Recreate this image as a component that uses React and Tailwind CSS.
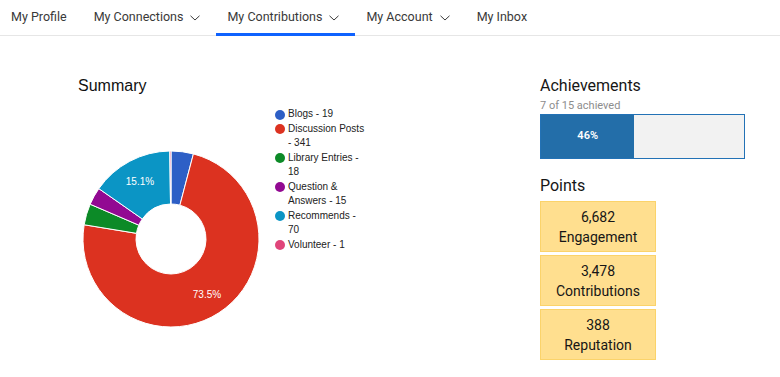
import React from 'react';

const tabs = [
  { label: 'My Profile' },
  { label: 'My Connections', menu: true },
  { label: 'My Contributions', menu: true, active: true },
  { label: 'My Account', menu: true },
  { label: 'My Inbox' },
];

const slices = [
  { name: 'Blogs', value: 19, color: '#2d5fc6' },
  { name: 'Discussion Posts', value: 341, color: '#dc3220' },
  { name: 'Library Entries', value: 18, color: '#0c8a27' },
  { name: 'Question & Answers', value: 15, color: '#920992' },
  { name: 'Recommends', value: 70, color: '#0b95c5' },
  { name: 'Volunteer', value: 1, color: '#e0457a' },
];

const points = [
  { value: '6,682', label: 'Engagement' },
  { value: '3,478', label: 'Contributions' },
  { value: '388', label: 'Reputation' },
];

const Chevron = () => (
  <svg width="10" height="6" viewBox="0 0 10 6" className="ml-[7px]">
    <path d="M0.5 0.8 L5 5 L9.5 0.8" fill="none" stroke="#393939" strokeWidth="1" />
  </svg>
);

const arcPath = (cx, cy, R, r, a0, a1) => {
  const pt = (rad, a) => [cx + rad * Math.sin(a), cy - rad * Math.cos(a)];
  const large = a1 - a0 > Math.PI ? 1 : 0;
  const [x0, y0] = pt(R, a0);
  const [x1, y1] = pt(R, a1);
  const [x2, y2] = pt(r, a1);
  const [x3, y3] = pt(r, a0);
  return `M${x0} ${y0} A${R} ${R} 0 ${large} 1 ${x1} ${y1} L${x2} ${y2} A${r} ${r} 0 ${large} 0 ${x3} ${y3} Z`;
};

const Donut = () => {
  const total = slices.reduce((s, d) => s + d.value, 0);
  let acc = 0;
  return (
    <svg width="176" height="176" viewBox="0 0 176 176">
      {slices.map((d) => {
        const a0 = (acc / total) * Math.PI * 2;
        acc += d.value;
        const a1 = (acc / total) * Math.PI * 2;
        return (
          <path key={d.name} d={arcPath(88, 88, 88, 35, a0, a1)} fill={d.color} stroke="#fff" strokeWidth="1" />
        );
      })}
      <text x="57" y="34" textAnchor="middle" fill="#fff" fontSize="10" fontFamily="'Liberation Sans', Arial, sans-serif">15.1%</text>
      <text x="124" y="147" textAnchor="middle" fill="#fff" fontSize="10" fontFamily="'Liberation Sans', Arial, sans-serif">73.5%</text>
    </svg>
  );
};

export default function App() {
  return (
    <div className="w-[780px] h-[377px] bg-white overflow-hidden font-['Roboto',sans-serif] text-[#161616]">
      <nav className="flex h-[36px] border-b border-[#e6e6e6]">
        {tabs.map((t) => (
          <div
            key={t.label}
            className={`flex items-center pt-[2px] pl-[11px] pr-[16px] text-[12.5px] text-[#393939] border-b-[3px] -mb-px ${t.active ? 'border-[#0f62fe]' : 'border-transparent'}`}
          >
            {t.label}
            {t.menu && <Chevron />}
          </div>
        ))}
      </nav>

      <div className="flex">
        <section className="w-[540px] pl-[78px] pt-[40px]">
          <h2 className="text-[16px] leading-[20px] font-['Liberation_Sans',Arial,sans-serif] text-[#111]">Summary</h2>
          <div className="flex items-start mt-[11px] font-['Liberation_Sans',Arial,sans-serif]">
            <div className="ml-[5px] mt-[44px]">
              <Donut />
            </div>
            <ul className="ml-[16px] text-[10px] leading-[14.5px] text-[#222]">
              {slices.map((d) => (
                <li key={d.name} className="flex items-start">
                  <span className="mt-[2.5px] w-[10px] h-[10px] rounded-full shrink-0" style={{ backgroundColor: d.color }} />
                  <span className="ml-[3px] w-[78px]">
                    {d.name} - {d.value}
                  </span>
                </li>
              ))}
            </ul>
          </div>
        </section>

        <section className="w-[205px] pt-[40px]">
          <h2 className="text-[16px] leading-[20px]">Achievements</h2>
          <p className="text-[11px] leading-[12px] text-[#8d8d8d] mt-[4px]">7 of 15 achieved</p>
          <div className="mt-[2px] h-[45px] border border-[#2372b6] bg-[#f2f2f2] flex">
            <div className="w-[46%] bg-[#236ea9] flex items-center justify-center text-white text-[11px] font-semibold">46%</div>
          </div>
          <h2 className="text-[16px] leading-[20px] mt-[17px]">Points</h2>
          <div className="mt-[5px] flex flex-col gap-[3px] w-[116px]">
            {points.map((p) => (
              <div
                key={p.label}
                className="h-[51px] bg-[#ffdf8f] border border-[#fbd36a] flex flex-col items-center justify-center text-[14px] leading-[20px] text-[#161616]"
              >
                <span>{p.value}</span>
                <span>{p.label}</span>
              </div>
            ))}
          </div>
        </section>
      </div>
    </div>
  );
}
